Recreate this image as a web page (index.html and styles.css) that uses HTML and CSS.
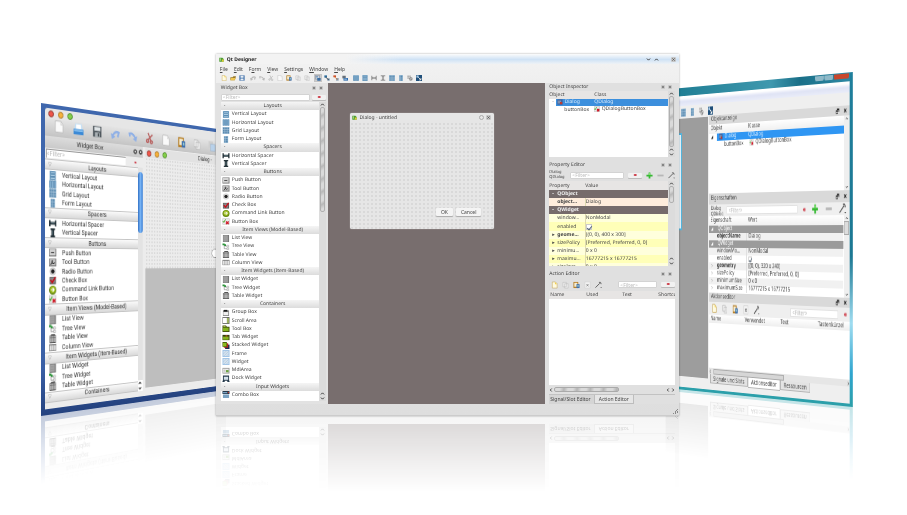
FILE: index.html
```html
<!DOCTYPE html>
<html lang="en">
<head>
<meta charset="utf-8">
<title>Qt Designer</title>
<link rel="stylesheet" href="styles.css">
</head>
<body>
<svg class="sprite" aria-hidden="true">
  <symbol id="vl" viewBox="0 0 16 16"><path fill="#8fb6d3" d="M1 0h14v16H1z"/><path fill="#4c7fa8" d="M2 1h12v4H2zM2 6h12v4H2zM2 11h12v4H2z"/><path fill="#a9cbe2" d="M3 2h10v2H3zM3 7h10v2H3zM3 12h10v2H3z"/></symbol>
  <symbol id="hl" viewBox="0 0 16 16"><path fill="#a5c5dd" d="M0 1h16v14H0z"/><path fill="#4c7fa8" d="M1 1h4v14H1zM6 1h4v14H6zM11 1h4v14h-4z"/><path fill="#8fb9d8" d="M2 2h2v12H2zM7 2h2v12H7zM12 2h2v12h-2z"/></symbol>
  <symbol id="gl" viewBox="0 0 16 16"><path fill="#b5cfe2" d="M0 0h16v16H0z"/><path fill="#5a8ab0" d="M1 1h4v4H1zM6 1h4v4H6zM11 1h4v4h-4zM1 6h4v4H1zM6 6h4v4H6zM11 6h4v4h-4zM1 11h4v4H1zM6 11h4v4H6zM11 11h4v4h-4z"/></symbol>
  <symbol id="fl" viewBox="0 0 16 16"><path fill="#a9c7de" d="M3 0h10v16H3z"/><path fill="#5a8ab0" d="M4 1h3v4H4zM8 1h4v4H8zM4 6h3v4H4zM8 6h4v4H8zM4 11h3v4H4zM8 11h4v4H8z"/></symbol>
  <symbol id="hs" viewBox="0 0 16 16"><path fill="#26343a" d="M0 3h3v3h10V3h3v11h-3v-3H3v3H0z"/><path fill="#59707a" d="M4 7h8v2H4z"/></symbol>
  <symbol id="vs" viewBox="0 0 16 16"><path fill="#26343a" d="M3 0h10v3h-2v10h2v3H3v-3h2V3H3z"/><path fill="#59707a" d="M7 4h2v8H7z"/></symbol>
  <symbol id="pb" viewBox="0 0 16 16"><path fill="#777" d="M0 1h16v14H0z"/><path fill="#d3d3d3" d="M1 2h13v11H1z"/><path fill="#444" d="M4 7h7v2H4z"/></symbol>
  <symbol id="tb" viewBox="0 0 16 16"><path fill="#777" d="M0 1h16v14H0z"/><path fill="#c2c2c2" d="M1 2h13v11H1z"/><path d="M3 12l5-6m0-2a3 3 0 1 0 4 4" stroke="#333" stroke-width="2" fill="none"/></symbol>
  <symbol id="rb" viewBox="0 0 16 16"><circle cx="8" cy="8" r="7" fill="#c9c9c9"/><circle cx="8" cy="8" r="5" fill="#f5f5f5"/><circle cx="8" cy="8" r="4" fill="#222"/></symbol>
  <symbol id="cb" viewBox="0 0 16 16"><path fill="#555" d="M1 2h14v13H1z"/><path fill="#888" d="M2 3h11v10H2z"/><path d="M3 7l4 5 7-10" stroke="#c8101c" stroke-width="3" fill="none"/></symbol>
  <symbol id="cl" viewBox="0 0 16 16"><circle cx="8" cy="8" r="8" fill="#64860f"/><circle cx="8" cy="7" r="6" fill="#a0bf22"/><path d="M4 7h7M8 4l3 3-3 4" stroke="#fff" stroke-width="2" fill="none"/></symbol>
  <symbol id="bb" viewBox="0 0 16 16"><path fill="#bbb" d="M0 1h16v14H0z"/><path fill="#e9e9e9" d="M1 2h14v12H1z"/><path d="M1 7l2 3 4-7" stroke="#43a625" stroke-width="2" fill="none"/><path d="M8 8l6 6m0-6l-6 6" stroke="#cf1624" stroke-width="3"/></symbol>
  <symbol id="lv" viewBox="0 0 16 16"><path fill="#777" d="M1 0h14v16H1z"/><path fill="#aaa" d="M2 1h10v14H2z"/><path stroke="#888" d="M3 4h8M3 7h8M3 10h8M3 13h8"/></symbol>
  <symbol id="tv" viewBox="0 0 16 16"><path stroke="#555" fill="none" d="M4 4v9h6M5 7h5"/><path fill="#2b9338" d="M0 1h5v2h3v4H4V5H0z"/><path fill="#fff" stroke="#888" d="M10 5h4v4h-4zM10 11h4v4h-4z"/></symbol>
  <symbol id="ta" viewBox="0 0 16 16"><path fill="#555" d="M1 2h14v14H1zM4 0h9v2H4z"/><path fill="#bcbcbc" d="M2 3h3v3H2zM6 3h4v3H6zM11 3h3v3h-3zM2 7h3v7H2zM6 7h4v7H6zM11 7h3v7h-3z"/></symbol>
  <symbol id="cv" viewBox="0 0 16 16"><path fill="#777" d="M0 2h16v12H0z"/><path fill="#e5e5e5" d="M1 4h4v9H1zM6 4h4v9H6zM11 4h4v9h-4z"/></symbol>
  <symbol id="gb" viewBox="0 0 16 16"><path fill="#888" d="M1 3h14v13H1z"/><path fill="#f0f0f0" d="M2 7h11v7H2z"/><path fill="#1c1c1c" d="M3 2h8v4H3z"/></symbol>
  <symbol id="sa" viewBox="0 0 16 16"><path fill="#666" d="M0 0h16v16H0z"/><path fill="#fff" d="M1 2h9v12H1z"/><path fill="#b5d55c" d="M11 2h3v12h-3z"/></symbol>
  <symbol id="tx" viewBox="0 0 16 16"><path fill="#3e4a0c" d="M0 1h8l2 3h6v12H0z"/><path fill="#84b31d" d="M1 6h13v8H1z"/><path fill="#c3dd58" d="M2 2h5v2H2z"/></symbol>
  <symbol id="tw" viewBox="0 0 16 16"><path fill="#33400e" d="M0 2h16v12H0z"/><path fill="#85b41e" d="M1 6h13v7H1z"/><path fill="#c25b20" d="M7 3h4v3H7z"/></symbol>
  <symbol id="sw" viewBox="0 0 16 16"><path fill="#1a2b55" d="M6 6h10v10H6z"/><path fill="#ba2119" d="M3 3h10v10H3z"/><path fill="#42570d" d="M0 0h10v11H0z"/><path fill="#8dbc20" d="M1 2h8v8H1z"/></symbol>
  <symbol id="fr" viewBox="0 0 16 16"><path fill="#9dc2e7" d="M0 0h16v16H0z"/><path fill="#d4e2ef" d="M2 2h12v12H2z"/><path stroke="#9db7d0" d="M2 9l7-7M3 14L14 3M9 14l5-5"/></symbol>
  <symbol id="md" viewBox="0 0 16 16"><path fill="#999" d="M0 2h16v13H0z"/><path fill="#ececec" d="M1 4h13v9H1z"/><path fill="#6ba343" d="M8 7h6v5H8z"/><path fill="#ccc" d="M2 6h5v5H2z"/></symbol>
  <symbol id="dw" viewBox="0 0 16 16"><path fill="#263a4c" d="M1 1h14v12h1v3h-5v-3H5v3H0v-3h1z"/><path fill="#d5e2ec" d="M3 4h10v7H3z"/></symbol>
  <symbol id="co" viewBox="0 0 16 16"><path fill="#25394a" d="M0 0h16v7H0z"/><path fill="#7aa2c2" d="M1 2h10v3H1zM1 8h14v8H1z"/><path fill="#bd3b31" d="M12 2h3v3h-3z"/></symbol>
  <symbol id="qt" viewBox="0 0 16 16"><path fill="#4a9a31" d="M1 2h10l4 4v9H1z"/><path fill="#a8db7f" d="M3 4h3v8H3z"/><path fill="#e3cf38" d="M9 8h6v7H9z"/></symbol>
  <symbol id="new" viewBox="0 0 16 16"><path fill="#fffbe0" stroke="#b8943c" d="M3 1h7l4 4v10H3z"/><path fill="#f1cf52" d="M9 1l5 5H9z"/></symbol>
  <symbol id="doc" viewBox="0 0 16 16"><path fill="#fafafa" stroke="#b5b5b5" d="M2 1h9l3 4v10H2z"/><path fill="#ddd" d="M10 1l4 5h-4z"/></symbol>
  <symbol id="open" viewBox="0 0 16 16"><path fill="#9a7b2a" d="M1 6h6l2-3h7l-3 11H1z"/><path fill="#efc54f" d="M3 8h12l-3 6H1z"/></symbol>
  <symbol id="save" viewBox="0 0 16 16"><path fill="#3d6ea7" d="M1 1h14v14H1z"/><path fill="#e8eef5" d="M4 2h8v5H4zM4 9h8v5H4z"/></symbol>
  <symbol id="disk" viewBox="0 0 16 16"><path fill="#50585e" d="M1 1h14v14H1z"/><path fill="#dfe4e6" d="M3 2h10v5H3z"/><path fill="#a9b0b4" d="M4 9h8v6H4z"/><path fill="#343a3e" d="M9 10h2v4H9z"/></symbol>
  <symbol id="tray" viewBox="0 0 16 16"><path fill="#c4dff4" d="M3 1h10l2 8H1z"/><path fill="#fff" d="M4 2h8v6H4z"/><path fill="#3c8ad6" d="M0 8h16v7H0z"/><path fill="#8cc3f0" d="M1 9h14v2H1z"/></symbol>
  <symbol id="undo" viewBox="0 0 16 16"><path fill="none" stroke="currentColor" stroke-width="3" d="M3 11Q8 3 14 6L12 12"/><path fill="currentColor" d="M0 7l2 8 6-3z"/></symbol>
  <symbol id="redo" viewBox="0 0 16 16"><path fill="none" stroke="currentColor" stroke-width="3" d="M13 11Q8 3 2 5L3 9"/><path fill="currentColor" d="M16 7l-2 8-6-3z"/></symbol>
  <symbol id="cut" viewBox="0 0 16 16"><path stroke="currentColor" stroke-width="2" d="M5 1l5 10M13 3L5 10"/><circle cx="4" cy="12" r="2" fill="none" stroke="currentColor" stroke-width="2"/><circle cx="11" cy="13" r="2" fill="none" stroke="currentColor" stroke-width="2"/></symbol>
  <symbol id="copy" viewBox="0 0 16 16"><path fill="#eee" stroke="#b3b3b3" d="M2 2h8v10H2zM6 5h8v10H6z"/></symbol>
  <symbol id="paste" viewBox="0 0 16 16"><path fill="#b6802a" d="M1 1h11v14H1z"/><path fill="#f6edd2" d="M3 3h7v9H3z"/><path fill="#3f6fae" d="M8 6h7v9H8z"/><path fill="#9cc" d="M10 8h3v4h-3z"/></symbol>
  <symbol id="rais" viewBox="0 0 16 16"><path fill="#cfcfcf" d="M1 1h10v10H1z"/><path fill="#b8d1ea" stroke="#a9b8c8" d="M5 5h10v10H5z"/></symbol>
  <symbol id="ed" viewBox="0 0 16 16"><path fill="#c9d4de" stroke="#667" d="M1 1h11v10H1z"/><path fill="#3a6ea5" d="M2 4h6v2H2zM6 8h9v7H6z"/></symbol>
  <symbol id="dlg" viewBox="0 0 16 16"><path fill="#3f5f9a" d="M1 1h14v14H1z"/><path fill="#7f8fae" d="M2 4h9v8H2z"/><path fill="#c0392f" d="M8 8h6v6H8z"/></symbol>
  <symbol id="sig" viewBox="0 0 16 16"><path fill="#2a6a9a" d="M1 1h7v6H1z"/><path fill="#6b8aa5" d="M9 9h6v6H9z"/><path stroke="#222" stroke-width="2" d="M5 6l7 7"/></symbol>
  <symbol id="bud" viewBox="0 0 16 16"><path fill="#cf4b24" d="M1 1h7v5H1z"/><path fill="#8a9fb2" d="M8 8h7v7H8z"/><path stroke="#d8742c" stroke-width="2" d="M3 4l9 8"/></symbol>
  <symbol id="tab" viewBox="0 0 16 16"><path fill="#666f78" d="M1 2h9v7H1z"/><path fill="#316eaf" d="M4 8h12v7H4z"/><path fill="#cfe1f2" d="M6 10h7v2H6z"/></symbol>
  <symbol id="spl" viewBox="0 0 16 16"><path stroke="#777" stroke-width="2" d="M2 2v12M14 2v12M3 8h10M5 5v6M11 5v6"/></symbol>
  <symbol id="spv" viewBox="0 0 16 16"><path stroke="#777" stroke-width="2" d="M2 2h12M2 14h12M8 3v10M5 5h6M5 11h6"/></symbol>
  <symbol id="brk" viewBox="0 0 16 16"><path fill="#aaa" d="M1 1h4v4H1zM6 1h4v4H6zM1 6h4v4H1z"/><circle cx="10" cy="10" r="5" fill="#8e8e8e"/><path stroke="#ddd" stroke-width="2" d="M7 13l6-6"/></symbol>
  <symbol id="adj" viewBox="0 0 16 16"><path fill="#1f4f7a" d="M0 0h16v16H0z"/><path fill="#a9cbe6" d="M1 1h6v6H1z"/><path stroke="#fff" stroke-width="2" d="M6 6l7 7M13 8v5H8"/></symbol>
  <symbol id="plus" viewBox="0 0 16 16"><path fill="#36b932" d="M6 1h4v5h5v4h-5v5H6v-5H1V6h5z"/><path fill="#8be979" d="M7 2h2v5H7z"/></symbol>
  <symbol id="minus" viewBox="0 0 16 16"><path fill="#b7b7b7" d="M1 6h14v4H1z"/></symbol>
  <symbol id="wr" viewBox="0 0 16 16"><path stroke="#555" stroke-width="2" fill="none" d="M1 14L11 4M9 2q5-2 5 4"/><path fill="#333" d="M12 13h4l-2 2z"/></symbol>
  <symbol id="del" viewBox="0 0 16 16"><path fill="#f2f2f2" stroke="#ccc" d="M2 1h12v14H2z"/><path stroke="#888" stroke-width="2" d="M6 6l4 5M10 6l-4 5"/></symbol>
  <symbol id="clr" viewBox="0 0 16 16"><path fill="#c93340" d="M2 8l4-4h8v8H6z"/><path stroke="#f6c9cc" stroke-width="1" d="M7 6l4 4M11 6l-4 4"/></symbol>
  <symbol id="x" viewBox="0 0 16 16"><rect width="16" height="16" rx="4" fill="#c6c6c6"/><path stroke="#444" stroke-width="2" d="M4 4l8 8M12 4l-8 8"/></symbol>
  <symbol id="fd" viewBox="0 0 16 16"><rect width="16" height="16" rx="4" fill="#c6c6c6"/><path stroke="#444" stroke-width="2" fill="none" d="M4 8l4-4 4 4-4 4z"/></symbol>
  <symbol id="px" viewBox="0 0 16 16"><path stroke="#222" stroke-width="3" d="M3 3l10 10M13 3L3 13"/></symbol>
  <symbol id="pf" viewBox="0 0 16 16"><path fill="#222" d="M5 1h10v9h-3V5H5zM1 6h9v9H1z"/><path fill="#eee" d="M3 10h5v3H3z"/></symbol>
  <symbol id="mx" viewBox="0 0 16 16"><circle cx="8" cy="8" r="7" fill="#444"/><path stroke="#fff" stroke-width="2" d="M5 5l6 6M11 5l-6 6"/></symbol>
  <symbol id="up" viewBox="0 0 16 16"><path stroke="#333" stroke-width="3" fill="none" d="M3 11l5-5 5 5"/></symbol>
  <symbol id="dn" viewBox="0 0 16 16"><path stroke="#333" stroke-width="3" fill="none" d="M3 5l5 5 5-5"/></symbol>
  <symbol id="lt" viewBox="0 0 16 16"><path stroke="#222" stroke-width="3" fill="none" d="M11 2L5 8l6 6"/></symbol>
  <symbol id="rt" viewBox="0 0 16 16"><path stroke="#222" stroke-width="3" fill="none" d="M5 2l6 6-6 6"/></symbol>
</svg>

<main class="stage">

<section class="win mac" aria-label="Designer on Mac">
  <div class="lights"><i></i><i></i><i></i></div>
  <div class="mactools">
    <svg><use href="#doc"/></svg><svg><use href="#tray"/></svg><svg><use href="#disk"/></svg><svg class="blue"><use href="#undo"/></svg><svg class="blue"><use href="#redo"/></svg><svg class="red"><use href="#cut"/></svg><svg><use href="#doc"/></svg><svg><use href="#paste"/></svg><svg><use href="#copy"/></svg><svg><use href="#rais"/></svg>
  </div>
  <div class="macbody">
    <div class="macdock">
      <div class="macbar"><h2>Widget Box</h2><svg><use href="#mx"/></svg><svg><use href="#mx"/></svg></div>
      <div class="macfilter"><input type="text" placeholder="&lt;Filter&gt;" aria-label="Filter widgets"><svg><use href="#clr"/></svg></div>
      <div class="listwrap">
        <ul class="widgets">
          <li class="cat">Layouts</li>
          <li><svg><use href="#vl"/></svg>Vertical Layout</li>
          <li><svg><use href="#hl"/></svg>Horizontal Layout</li>
          <li><svg><use href="#gl"/></svg>Grid Layout</li>
          <li><svg><use href="#fl"/></svg>Form Layout</li>
          <li class="cat">Spacers</li>
          <li><svg><use href="#hs"/></svg>Horizontal Spacer</li>
          <li><svg><use href="#vs"/></svg>Vertical Spacer</li>
          <li class="cat">Buttons</li>
          <li><svg><use href="#pb"/></svg>Push Button</li>
          <li><svg><use href="#tb"/></svg>Tool Button</li>
          <li><svg><use href="#rb"/></svg>Radio Button</li>
          <li><svg><use href="#cb"/></svg>Check Box</li>
          <li><svg><use href="#cl"/></svg>Command Link Button</li>
          <li><svg><use href="#bb"/></svg>Button Box</li>
          <li class="cat">Item Views (Model-Based)</li>
          <li><svg><use href="#lv"/></svg>List View</li>
          <li><svg><use href="#tv"/></svg>Tree View</li>
          <li><svg><use href="#ta"/></svg>Table View</li>
          <li><svg><use href="#cv"/></svg>Column View</li>
          <li class="cat">Item Widgets (Item-Based)</li>
          <li><svg><use href="#lv"/></svg>List Widget</li>
          <li><svg><use href="#tv"/></svg>Tree Widget</li>
          <li><svg><use href="#ta"/></svg>Table Widget</li>
          <li class="cat">Containers</li>
        </ul>
        <div class="macscroll"><b></b><span><svg><use href="#up"/></svg><svg><use href="#dn"/></svg></span></div>
      </div>
    </div>
    <div class="macarea">
      <div class="macform">
        <div class="macsub"><span class="lights"><i></i><i></i><i></i></span>Dialog -</div>
        <div class="maccanvas"><button type="button" aria-label="Cancel"></button></div>
      </div>
    </div>
  </div>
</section>

<section class="win vista" aria-label="Designer on Windows">
  <div class="caption"><i></i><i></i><i class="close"></i></div>
  <div class="band"></div>
  <div class="vbody">
    <div class="vleft">
      <div class="vtools"><svg><use href="#gl"/></svg><svg><use href="#fl"/></svg><svg><use href="#brk"/></svg><svg><use href="#adj"/></svg></div>
      <div class="varea"><div class="vform"></div></div>
    </div>
    <div class="vdock">
      <div class="vbar"><h2>Objektanzeige</h2><svg><use href="#pf"/></svg><svg><use href="#px"/></svg></div>
      <div class="listwrap vtree">
        <table>
          <thead><tr><th class="c1">Objekt</th><th>Klasse</th></tr></thead>
          <tbody>
            <tr class="sel"><td><span class="tw">◢</span><svg><use href="#dlg"/></svg> Dialog</td><td>QDialog</td></tr>
            <tr><td class="in">buttonBox</td><td><svg><use href="#bb"/></svg> QDialogButtonBox</td></tr>
          </tbody>
        </table>
        <div class="vscroll"><svg><use href="#up"/></svg><svg><use href="#dn"/></svg></div>
      </div>
      <div class="vbar wide"><h2>Eigenschaften</h2><svg><use href="#pf"/></svg><svg><use href="#px"/></svg></div>
      <div class="vfilter"><p>Dialog<br>QDialog</p><input type="text" placeholder="&lt;Filter&gt;" aria-label="Eigenschaften filtern"><svg class="s"><use href="#clr"/></svg><svg><use href="#plus"/></svg><svg><use href="#minus"/></svg><svg><use href="#wr"/></svg></div>
      <div class="listwrap vprops">
        <table>
          <thead><tr><th class="c1">Eigenschaft</th><th>Wert</th></tr></thead>
          <tbody>
            <tr class="grp"><td colspan="2"><span class="tw">◢</span>QObject</td></tr>
            <tr class="alt"><td><b>objectName</b></td><td>Dialog</td></tr>
            <tr class="grp"><td colspan="2"><span class="tw">◢</span>QWidget</td></tr>
            <tr class="alt"><td>windowMo...</td><td>NonModal</td></tr>
            <tr><td>enabled</td><td><input type="checkbox" checked aria-label="enabled"></td></tr>
            <tr class="alt"><td><span class="ex">▷</span><b>geometry</b></td><td>[(0, 0), 320 x 240]</td></tr>
            <tr><td><span class="ex">▷</span>sizePolicy</td><td>[Preferred, Preferred, 0, 0]</td></tr>
            <tr class="alt"><td><span class="ex">▷</span>minimumSize</td><td>0 x 0</td></tr>
            <tr><td><span class="ex">▷</span>maximumSize</td><td>16777215 x 16777215</td></tr>
          </tbody>
        </table>
        <div class="vscroll"><svg><use href="#up"/></svg><b></b><svg><use href="#dn"/></svg></div>
      </div>
      <div class="vbar"><h2>Aktionseditor</h2><svg><use href="#pf"/></svg><svg><use href="#px"/></svg></div>
      <div class="vacts"><svg><use href="#new"/></svg><svg><use href="#copy"/></svg><svg><use href="#paste"/></svg><svg><use href="#del"/></svg><svg><use href="#wr"/></svg><input type="text" placeholder="&lt;Filter&gt;" aria-label="Aktionen filtern"><svg class="s"><use href="#clr"/></svg></div>
      <div class="vlist"><div class="heads"><span>Name</span><span>Verwendet</span><span>Text</span><span>Tastenkürzel</span></div></div>
      <div class="vh"><svg><use href="#lt"/></svg><b></b><svg><use href="#rt"/></svg></div>
      <div class="vtabs"><button type="button">Signale und Slots</button><button type="button" class="on">Aktionseditor</button><button type="button">Ressourcen</button></div>
    </div>
  </div>
</section>

<section class="win kde" aria-label="Designer on Linux">
  <header class="title"><svg><use href="#qt"/></svg><h1>Qt Designer</h1><svg class="push"><use href="#dn"/></svg><svg><use href="#up"/></svg><svg class="last"><use href="#x"/></svg></header>
  <nav class="menu"><button type="button"><u>F</u>ile</button><button type="button"><u>E</u>dit</button><button type="button">F<u>o</u>rm</button><button type="button"><u>V</u>iew</button><button type="button"><u>S</u>ettings</button><button type="button"><u>W</u>indow</button><button type="button"><u>H</u>elp</button></nav>
  <div class="tools">
    <span><svg><use href="#new"/></svg><svg><use href="#open"/></svg><svg><use href="#save"/></svg></span>
    <span><svg><use href="#undo"/></svg><svg><use href="#redo"/></svg><svg><use href="#cut"/></svg><svg><use href="#doc"/></svg><svg><use href="#paste"/></svg><svg><use href="#copy"/></svg><svg><use href="#copy"/></svg></span>
    <span><svg class="on"><use href="#ed"/></svg><svg><use href="#sig"/></svg><svg><use href="#bud"/></svg><svg><use href="#tab"/></svg></span>
    <span><svg><use href="#hl"/></svg><svg><use href="#vl"/></svg><svg><use href="#spl"/></svg><svg><use href="#spv"/></svg><svg><use href="#gl"/></svg><svg><use href="#fl"/></svg><svg><use href="#brk"/></svg><svg><use href="#adj"/></svg></span>
  </div>
  <div class="kbody">
    <aside class="kleft">
      <div class="kbar"><h2>Widget Box</h2><svg><use href="#fd"/></svg><svg><use href="#x"/></svg></div>
      <div class="kfilter"><input type="text" placeholder="&lt;Filter&gt;" aria-label="Filter widget box"><button type="button" aria-label="Clear"><svg><use href="#clr"/></svg></button></div>
      <div class="listwrap">
        <ul class="widgets">
          <li class="cat">Layouts</li>
          <li><svg><use href="#vl"/></svg>Vertical Layout</li>
          <li><svg><use href="#hl"/></svg>Horizontal Layout</li>
          <li><svg><use href="#gl"/></svg>Grid Layout</li>
          <li><svg><use href="#fl"/></svg>Form Layout</li>
          <li class="cat">Spacers</li>
          <li><svg><use href="#hs"/></svg>Horizontal Spacer</li>
          <li><svg><use href="#vs"/></svg>Vertical Spacer</li>
          <li class="cat">Buttons</li>
          <li><svg><use href="#pb"/></svg>Push Button</li>
          <li><svg><use href="#tb"/></svg>Tool Button</li>
          <li><svg><use href="#rb"/></svg>Radio Button</li>
          <li><svg><use href="#cb"/></svg>Check Box</li>
          <li><svg><use href="#cl"/></svg>Command Link Button</li>
          <li><svg><use href="#bb"/></svg>Button Box</li>
          <li class="cat">Item Views (Model-Based)</li>
          <li><svg><use href="#lv"/></svg>List View</li>
          <li><svg><use href="#tv"/></svg>Tree View</li>
          <li><svg><use href="#ta"/></svg>Table View</li>
          <li><svg><use href="#cv"/></svg>Column View</li>
          <li class="cat">Item Widgets (Item-Based)</li>
          <li><svg><use href="#lv"/></svg>List Widget</li>
          <li><svg><use href="#tv"/></svg>Tree Widget</li>
          <li><svg><use href="#ta"/></svg>Table Widget</li>
          <li class="cat">Containers</li>
          <li><svg><use href="#gb"/></svg>Group Box</li>
          <li><svg><use href="#sa"/></svg>Scroll Area</li>
          <li><svg><use href="#tx"/></svg>Tool Box</li>
          <li><svg><use href="#tw"/></svg>Tab Widget</li>
          <li><svg><use href="#sw"/></svg>Stacked Widget</li>
          <li><svg><use href="#fr"/></svg>Frame</li>
          <li><svg><use href="#fr"/></svg>Widget</li>
          <li><svg><use href="#md"/></svg>MdiArea</li>
          <li><svg><use href="#dw"/></svg>Dock Widget</li>
          <li class="cat">Input Widgets</li>
          <li><svg><use href="#co"/></svg>Combo Box</li>
        </ul>
        <div class="kscroll"><svg><use href="#up"/></svg><b class="long"></b><svg class="end"><use href="#up"/></svg><svg><use href="#dn"/></svg></div>
      </div>
    </aside>
    <div class="kmdi">
      <div class="dialog">
        <header><svg><use href="#qt"/></svg><span>Dialog - untitled</span><i></i><svg><use href="#x"/></svg></header>
        <div class="canvas"><button type="button">OK</button><button type="button">Cancel</button></div>
      </div>
    </div>
    <aside class="kright">
      <div class="kbar first"><h2>Object Inspector</h2><svg><use href="#fd"/></svg><svg><use href="#x"/></svg></div>
      <div class="listwrap ktree">
        <table>
          <thead><tr><th class="c1">Object</th><th>Class</th></tr></thead>
          <tbody>
            <tr class="sel"><td><span class="tw">-</span><svg><use href="#dlg"/></svg> Dialog</td><td>QDialog</td></tr>
            <tr><td class="in">buttonBox</td><td><svg><use href="#bb"/></svg> QDialogButtonBox</td></tr>
          </tbody>
        </table>
        <div class="kscroll"><svg><use href="#up"/></svg><b class="full"></b><svg class="end"><use href="#up"/></svg><svg><use href="#dn"/></svg></div>
      </div>
      <div class="kbar"><h2>Property Editor</h2><svg><use href="#fd"/></svg><svg><use href="#x"/></svg></div>
      <div class="kprop"><p>Dialog<br>QDialog</p><input type="text" placeholder="&lt;Filter&gt;" aria-label="Filter properties"><button type="button" aria-label="Clear"><svg><use href="#clr"/></svg></button><svg><use href="#plus"/></svg><svg><use href="#minus"/></svg><svg><use href="#wr"/></svg></div>
      <div class="listwrap kprops">
        <table>
          <thead><tr><th class="c1">Property</th><th>Value</th></tr></thead>
          <tbody>
            <tr class="grp"><td colspan="2"><span class="tw">-</span>QObject</td></tr>
            <tr class="peach"><td><b>object...</b></td><td>Dialog</td></tr>
            <tr class="grp"><td colspan="2"><span class="tw">-</span>QWidget</td></tr>
            <tr class="pale"><td>window...</td><td>NonModal</td></tr>
            <tr class="deep tall"><td>enabled</td><td><input type="checkbox" checked aria-label="enabled"></td></tr>
            <tr class="pale"><td><span class="ex">▸</span><b>geome...</b></td><td>[(0, 0), 400 x 300]</td></tr>
            <tr class="deep"><td><span class="ex">▸</span>sizePolicy</td><td>[Preferred, Preferred, 0, 0]</td></tr>
            <tr class="pale"><td><span class="ex">▸</span>minimu...</td><td>0 x 0</td></tr>
            <tr class="deep"><td><span class="ex">▸</span>maximu...</td><td>16777215 x 16777215</td></tr>
            <tr class="pale"><td><span class="ex">▸</span>sizeIncr...</td><td>0 x 0</td></tr>
          </tbody>
        </table>
        <div class="kscroll"><svg><use href="#up"/></svg><b class="short"></b><svg class="end"><use href="#up"/></svg><svg><use href="#dn"/></svg></div>
      </div>
      <div class="kbar"><h2>Action Editor</h2><svg><use href="#fd"/></svg><svg><use href="#x"/></svg></div>
      <div class="kacts"><svg><use href="#new"/></svg><svg><use href="#copy"/></svg><svg><use href="#paste"/></svg><svg><use href="#del"/></svg><svg><use href="#wr"/></svg><input type="text" placeholder="&lt;Filter&gt;" aria-label="Filter actions"><button type="button" aria-label="Clear"><svg><use href="#clr"/></svg></button></div>
      <div class="klist"><div class="heads"><span>Name</span><span>Used</span><span>Text</span><span>Shortcut</span></div></div>
      <div class="kh"><svg><use href="#lt"/></svg><b></b><svg class="push"><use href="#lt"/></svg><svg><use href="#rt"/></svg></div>
      <div class="ktabs"><button type="button">Signal/Slot Editor</button><button type="button" class="on">Action Editor</button></div>
    </aside>
  </div>
  <footer class="status"></footer>
</section>

</main>
</body>
</html>
```
FILE: styles.css
```css
* { box-sizing: border-box; }
html, body { margin: 0; background: #fff; }
body { font-family: "Noto Sans", "Open Sans", sans-serif; color: #444; overflow: hidden; text-rendering: geometricPrecision; }
h1, h2, p, ul { margin: 0; padding: 0; }
ul { list-style: none; }
button, input { font: inherit; color: inherit; margin: 0; padding: 0; border: 0; background: none; min-width: 0; }
input::placeholder { color: #bbb; opacity: 1; }
svg { display: block; flex: none; width: 6px; height: 6px; }
.sprite { position: absolute; width: 0; height: 0; }
table { border-collapse: collapse; table-layout: fixed; flex: 1; min-width: 0; width: 100%; align-self: flex-start; }
th { text-align: left; font-weight: normal; }
th, td { padding: 0; white-space: nowrap; overflow: hidden; }
td svg { display: inline-block; vertical-align: middle; }
input[type="checkbox"] { appearance: none; display: block; width: 6px; height: 6px; border: 1px solid #ccc; background: #fff; }
input[type="checkbox"]:checked::after { content: ""; display: block; width: 2px; height: 4px; margin-left: 1px; border: solid #567; border-width: 0 1px 1px 0; rotate: 40deg; }

.stage { position: relative; min-height: 100vh; }
.win { position: absolute; display: flex; flex-direction: column; }
.listwrap { display: flex; flex: 1; overflow: hidden; background: #fff; }
.widgets { flex: 1; display: flex; flex-direction: column; min-width: 0; }
.widgets li { flex: 1; display: flex; align-items: center; min-height: 0; white-space: nowrap; }
.heads { display: flex; overflow: hidden; }
.heads span { flex: none; }

/* ---------- Mac window, turned away to the right ---------- */
.mac {
  left: 4.5%; top: 103px; width: 30%; height: 313px;
  padding: 4px 0 6px 5px;
  font-family: Roboto, "Liberation Sans", sans-serif;
  font-size: 7px; line-height: 8px; color: #333;
  background: linear-gradient(#3f67ad 60%, #3a5fa5 85%, #24427f);
  transform-origin: 0 51%;
  transform: perspective(760px) rotateY(35deg);
  -webkit-box-reflect: below 0 linear-gradient(transparent 78%, rgba(0,0,0,.28));
}
.lights { display: flex; gap: 5px; align-items: center; }
.lights i { width: 7px; height: 7px; border-radius: 50%; border: 1px solid #8b3a32; background: #f0564a; }
.lights i:nth-child(2) { border-color: #a9772b; background: #f5b13b; }
.lights i:nth-child(3) { border-color: #4f8a2f; background: #84cf49; }
.mac > .lights { height: 10px; padding-left: 4px; background: #e6e6e6; border-radius: 3px 0 0; }
.mactools { display: flex; gap: 12px; height: 18px; padding: 1px 0 0 11px; background: linear-gradient(#e4e4e4, #c4c4c4); }
.mactools svg { width: 13px; height: 13px; }
.blue { color: #8fb0e6; }
.red { color: #b8605f; }
.macbody { flex: 1; display: flex; min-height: 0; background: #ececec; }
.macdock { flex: none; width: 132px; display: flex; flex-direction: column; padding-bottom: 6px; }
.macbar { display: flex; align-items: center; gap: 2px; height: 12px; background: linear-gradient(#dcdcdc, #c9c9c9); }
.macbar h2 { flex: 1; font-size: 7px; font-weight: normal; text-align: center; }
.macfilter { height: 11px; display: flex; align-items: center; gap: 12px; }
.macfilter input { width: 80%; height: 9px; margin-left: 1px; background: #fff; border: 1px solid #999; border-width: 1px 0 0 1px; }
.macfilter svg { width: 4px; height: 4px; }
.macdock .widgets li { padding-left: 5px; gap: 7px; }
.macdock .widgets svg { width: 9px; height: 9px; }
.macdock .widgets .cat { justify-content: center; background: linear-gradient(#fafafa, #d9d9d9); border: 1px solid #c5c5c5; border-width: 1px 0; padding: 0 0 0 10px; position: relative; }
.macdock .cat::before { content: "▽"; position: absolute; left: 4px; font-size: 5px; color: #777; }
.macscroll { width: 7px; display: flex; flex-direction: column; background: #e3e3e3; padding-top: 5px; }
.macscroll b { height: 28%; border-radius: 4px; background: linear-gradient(90deg, #2f6fc4, #7ab5f5, #3b7fd6); }
.macscroll span { margin-top: auto; background: #fff; }
.macarea { flex: 1; min-width: 0; margin: 1px 0 9px 4px; background: #bebebe; }
.macform { height: 50%; display: flex; flex-direction: column; background: #e9e9e9; }
.macsub { display: flex; align-items: center; gap: 50px; height: 10px; padding-left: 2px; background: #e2e2e2; white-space: nowrap; }
.maccanvas { flex: 1; display: flex; align-items: flex-end; padding: 0 0 12px 106px; background: radial-gradient(#dadada 1px, transparent 1px) 0 0 / 4px 4px #ececec; }
.maccanvas button { flex: none; width: 50px; height: 11px; border: 1px solid #999; border-radius: 6px; background: #fff; }

/* ---------- Windows window, turned away to the left ---------- */
.vista {
  right: 6%; top: 72px; width: 36%; height: 335px;
  padding: 0 5px 3px 0;
  font-size: 7px; line-height: 8px;
  background: linear-gradient(#1f7f9c, #1c7893 55%, #9fdcf0 75%, #2fa5cf 90%, #2b9fa8);
  transform-origin: 100% 48%;
  transform: perspective(2032px) rotateY(-50deg);
  -webkit-box-reflect: below 0 linear-gradient(transparent 78%, rgba(0,0,0,.28));
}
.caption { display: flex; justify-content: flex-end; gap: 1px; height: 9px; padding: 1px 1px 3px; background: linear-gradient(90deg, #1b7a90, #3f98ae 60%, #1a6f88 75%, #2d88a4); }
.caption i { width: 14px; background: #8fb9c8; border-radius: 0 0 2px 2px; }
.caption .close { width: 24px; background: #c8462c; }
.band { height: 11px; background: linear-gradient(#fff 20%, #dfe3f5 55%, #e9ecf8); }
.vbody { flex: 1; display: flex; min-height: 0; background: #efefef; }
.vleft { flex: 1; display: flex; flex-direction: column; min-width: 0; padding-bottom: 12px; }
.vtools { height: 14px; display: flex; gap: 6px; justify-content: flex-end; align-items: center; padding-right: 4px; margin-right: -14px; }
.vtools svg { width: 11px; height: 9px; }
.varea { flex: 1; padding: 16px 0 0; background: #9d9d9d; }
.vform { width: 32px; height: 108px; background: #e8f4fb; border: 2px solid #52b4dc; }
.vdock { flex: none; width: 241px; display: flex; flex-direction: column; padding: 13px 0 6px 2px; }
.vbar { display: flex; align-items: center; gap: 6px; height: 10px; padding: 0 4px; background: #d9d9d9; }
.vbar.wide { height: 12px; }
.vbar h2 { font-size: 7px; font-weight: normal; margin-right: auto; }
.vdock .listwrap { flex: none; }
.vtree { height: 75px; }
.vdock th, .vdock td { height: 8px; line-height: 8px; }
.vdock th { height: 10px; padding-left: 3px; background: linear-gradient(#fff, #f0f0f0); }
.vdock .c1 { width: 68px; }
.vdock td + td { padding-left: 3px; }
.vdock td > svg { width: 11px; height: 7px; }
.vista .sel { background: #2f96f3; color: #d4eaff; }
.vista .sel .tw { color: #222; }
.vista .sel td:first-child { background: linear-gradient(90deg, #fff 14px, #2f96f3 14px); }
.vista .tw { display: inline-block; width: 16px; padding-left: 4px; font-size: 5px; }
.vista .in { padding-left: 28px; }
.vscroll { width: 9px; display: flex; flex-direction: column; align-items: center; background: #efefef; }
.vscroll svg { width: 5px; }
.vscroll svg:last-child { margin-top: auto; }
.vscroll b { width: 8px; height: 14px; border: 1px solid #aaa; background: #ddd; }
.vfilter { display: flex; align-items: center; gap: 8px; height: 13px; padding: 0 4px; }
.vfilter p { font-size: 6px; line-height: 6px; width: 20px; }
.vdock input[type="text"] { background: #fff; border: 1px solid #e2e2e2; height: 9px; padding-left: 3px; }
.vfilter input { flex: 1; }
.vfilter svg { width: 14px; height: 11px; }
.vdock svg.s { width: 6px; height: 6px; }
.vprops { height: 83px; }
.vprops td:first-child { padding-left: 15px; border-right: 1px solid #ddd; }
.vprops .ex { display: inline-block; width: 11px; margin-left: -11px; font-size: 5px; color: #888; }
.vprops .grp { background: #9b9b9b; color: #fff; }
.vprops .grp td:first-child { padding-left: 0; }
.vprops .alt { background: #f1f1f1; }
.vacts { display: flex; align-items: center; gap: 8px; height: 14px; padding: 0 4px; }
.vacts svg { width: 11px; height: 10px; }
.vacts input { width: 78px; margin-left: auto; }
.vlist { flex: 1; background: #fff; }
.vlist .heads { background: linear-gradient(#fff, #eee); padding-left: 3px; line-height: 9px; }
.vlist span { width: 62px; }
.vh { display: flex; align-items: center; height: 7px; background: #e6e6e6; }
.vh b { width: 52%; height: 6px; margin-left: 4px; border: 1px solid #aaa; background: #d6d6d6; }
.vh svg:last-child { margin-left: auto; }
.vh svg { width: 4px; height: 4px; }
.vtabs { display: flex; height: 11px; padding-left: 2px; align-items: flex-start; }
.vtabs button { height: 10px; padding: 0 5px; background: #e3e3e3; border: 1px solid #b5b5b5; border-top: 0; white-space: nowrap; }
.vtabs .on { height: 11px; background: #fff; }

/* ---------- Linux window in front ---------- */
.kde {
  left: 23.8%; top: 54px; width: 51.1%; height: 362px;
  font-size: 5px; line-height: 8px;
  background: linear-gradient(#f3f3f3, #ececec 12%, #dedede);
  box-shadow: 0 0 2px rgba(0,0,0,.35);
  -webkit-box-reflect: below -4px linear-gradient(transparent 78%, rgba(0,0,0,.3));
}
.title { display: flex; align-items: center; gap: 3px; height: 10px; padding: 1px 3px 0; background: linear-gradient(90deg, rgba(243,243,243,1) 28%, rgba(243,243,243,0) 40%), linear-gradient(#fbfbfb, #cfe2f5 55%, #eef2f6); }
.title h1 { font-size: 5px; font-weight: bold; color: #222; }
.title .push { margin-left: auto; }
.title .last { margin-left: 9px; }
.title svg { width: 5px; height: 5px; }
.menu { display: flex; gap: 6px; height: 9px; padding-left: 4px; }
.tools { display: flex; gap: 5px; height: 10px; align-items: center; padding-left: 5px; color: #bbb; }
.tools span { display: flex; gap: 3px; }
.tools svg.on { outline: 1px solid #c4c4c4; background: #ccc; }
.kbody { flex: 1; display: flex; min-height: 0; }
.kleft { width: 24.3%; display: flex; flex-direction: column; padding: 0 2px 3px 5px; background: #e2e2e2; }
.kbar { display: flex; align-items: center; gap: 3px; height: 9px; flex: none; padding-right: 3px; }
.kbar.first { height: 8px; }
.kbar h2 { font-size: 5px; font-weight: normal; margin-right: auto; }
.kbar svg { width: 4px; height: 4px; }
.kde input[type="text"] { background: #fff; border: 1px solid #d3d3d3; border-radius: 1px; height: 7px; line-height: 5px; padding-left: 1px; }
.kde button[aria-label] { width: 14px; height: 5px; display: flex; justify-content: center; background: #f1f1f1; border-radius: 1px; box-shadow: 0 1px 0 #bbb; }
.kde button[aria-label] svg { width: 4px; height: 4px; }
.kfilter { display: flex; gap: 2px; align-items: center; height: 10px; flex: none; }
.kfilter input { flex: 1; }
.kleft .widgets { padding-bottom: 2px; }
.kleft .widgets li { gap: 2px; padding-left: 1px; }
.kleft .widgets svg { width: 8px; height: 7px; }
.kleft .widgets .cat { justify-content: center; background: linear-gradient(#f5f5f5, #dcdcdc); position: relative; padding-left: 5px; }
.kleft .cat::before { content: "-"; position: absolute; left: 3px; }
.kscroll { width: 7px; display: flex; flex-direction: column; align-items: center; background: #dcdcdc; }
.kscroll svg { width: 5px; height: 5px; }
.kscroll b { width: 5px; border-radius: 2px; border: 1px solid #b0b0b0; background: repeating-linear-gradient(150deg, #dadada 0 4px, #b9b9b9 7px, #dadada 11px); }
.kscroll .long { height: 35%; }
.kscroll .full { flex: 1; }
.kscroll .short { height: 20%; }
.kscroll .end { margin-top: auto; }
.kmdi { flex: 1; padding: 30px 0 0 22px; background: #786e6e; min-width: 0; }
.dialog { width: 144px; background: #e6e6e6; border-radius: 2px; box-shadow: 0 0 1px #ddd; }
.dialog header { display: flex; align-items: center; gap: 2px; height: 9px; padding: 0 3px 0 2px; }
.dialog header span { margin-right: auto; }
.dialog header i { width: 5px; height: 5px; border: 1px solid #aaa; border-radius: 50%; }
.dialog header svg { width: 5px; height: 5px; }
.canvas { display: flex; justify-content: flex-end; align-items: flex-end; gap: 3px; height: 107px; padding: 0 13px 13px 0; background: radial-gradient(#d9d9d9 1px, transparent 1px) 0 0 / 4px 4px; }
.canvas button { height: 8px; min-width: 17px; padding: 0 5px; border-radius: 1px; background: #f4f4f4; box-shadow: 0 1px 1px #aaa; }
.kright { flex: none; width: 134px; display: flex; flex-direction: column; padding: 0 4px 0 4px; background: #e0e0e0; }
.kright .listwrap { flex: none; }
.ktree { height: 66px; margin-bottom: 3px; }
.kright th { height: 8px; line-height: 8px; background: #e7e5e4; }
.kright td { line-height: 7px; height: 7px; }
.kright .c1 { width: 45px; }
.kde .sel { background: #3c8fdd; color: #dcecfb; }
.kde .sel td:first-child { background: linear-gradient(90deg, #fff 7px, #3c8fdd 7px); }
.kde .sel .tw { color: #333; }
.kde .tw { display: inline-block; width: 8px; padding-left: 3px; }
.kde .in { padding-left: 15px; }
.kde td > svg { width: 6px; height: 6px; }
.kprop { display: flex; align-items: center; gap: 4px; height: 12px; }
.kprop p { font-size: 4px; line-height: 5px; width: 17px; }
.kprop input { flex: 1; }
.kprop svg { width: 7px; height: 7px; }
.kprops { height: 85px; margin-bottom: 3px; }
.kprops th { height: 9px; }
.kright .kprops .c1 { width: 36px; }
.kprops td, .kprops tr { height: 8px; line-height: 8px; }
.kprops .tall td { height: 9px; }
.kprops td:first-child { padding-left: 8px; border-right: 1px solid #dedab0; }
.kprops .ex { display: inline-block; width: 5px; margin-left: -5px; }
.kprops .grp { background: #766b6b; color: #eee; font-weight: bold; }
.kprops .grp td:first-child { padding-left: 0; border: 0; }
.kprops .peach { background: #ffeddc; }
.kprops .pale { background: #ffffdc; }
.kprops .deep { background: #ffffb8; }
.kacts { display: flex; align-items: center; gap: 4px; height: 13px; padding-left: 2px; }
.kacts svg { width: 7px; height: 8px; }
.kacts input { width: 39px; margin-left: auto; }
.klist { flex: 1; background: #fff; }
.klist .heads { background: #e7e5e4; padding-left: 1px; }
.klist span { width: 36px; }
.kh { display: flex; align-items: center; gap: 1px; height: 9px; }
.kh svg { width: 4px; height: 4px; }
.kh b { width: 65px; height: 5px; border: 1px solid #aaa; border-radius: 2px; background: repeating-linear-gradient(100deg, #dadada 0 5px, #b5b5b5 9px, #dadada 13px); }
.kh .push { margin-left: auto; }
.ktabs { display: flex; height: 10px; border-top: 1px solid #c2c2c2; }
.ktabs button { padding: 0 3px 1px 1px; background: #d5d5d5; white-space: nowrap; }
.ktabs .on { padding: 0 4px 1px; background: #e6e6e6; border: 1px solid #bdbdbd; border-top: 0; }
.status { height: 12px; border-bottom: 1px solid #ccc; background: linear-gradient(135deg, transparent 50%, #888 50% 60%, transparent 60% 70%, #888 70% 80%, transparent 80%) right 1px bottom 1px / 5px 5px no-repeat; }
```
